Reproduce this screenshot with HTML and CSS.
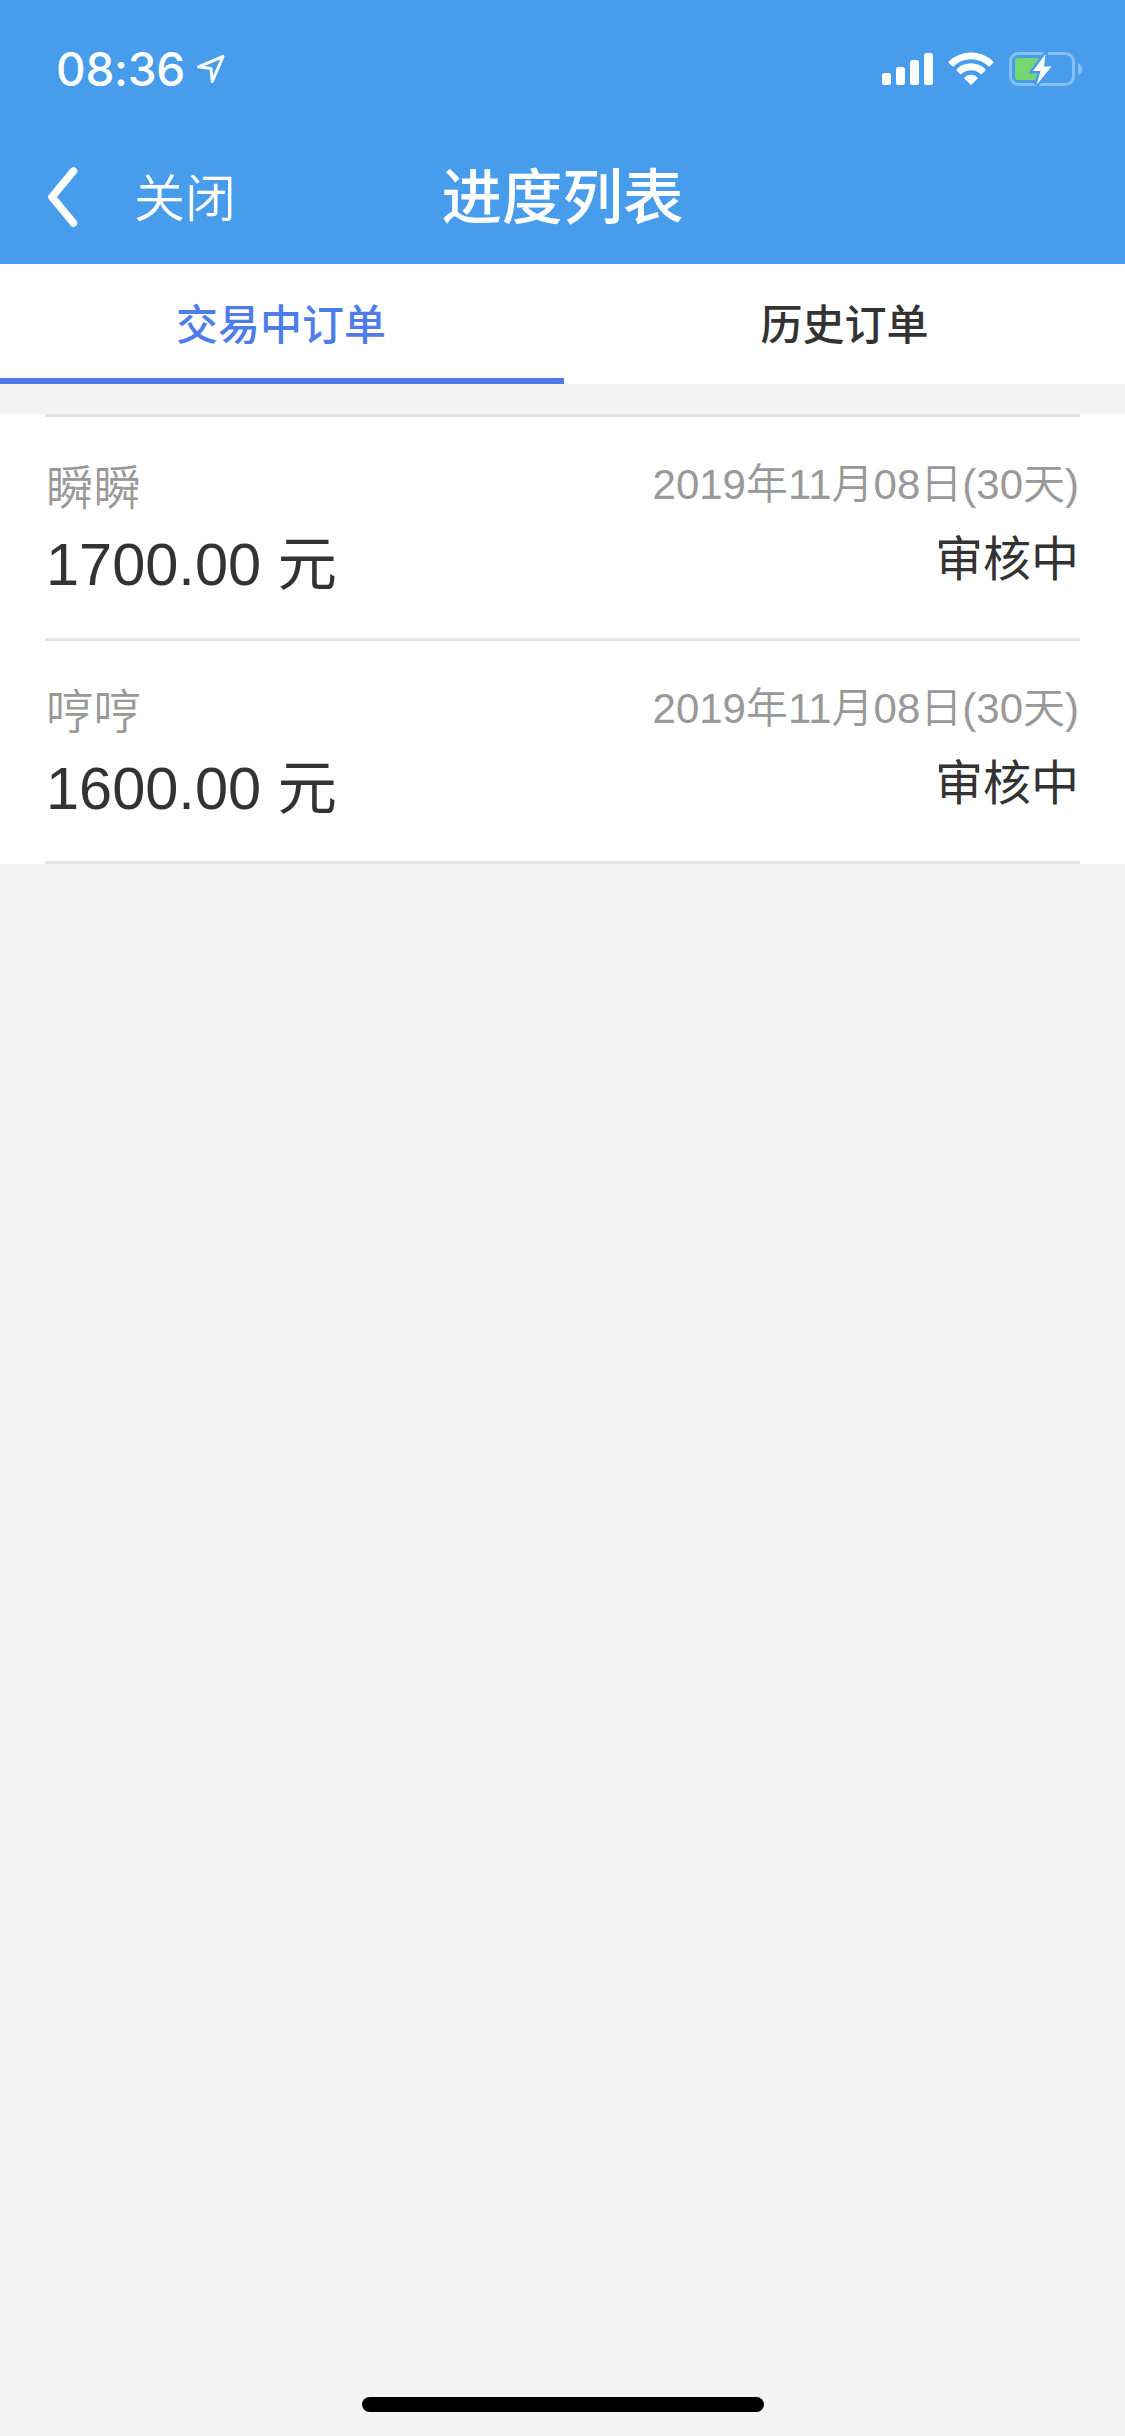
FILE: index.html
```
<!DOCTYPE html>
<html lang="zh-CN">
<head>
    <meta charset="UTF-8">
    <meta name="viewport" content="width=device-width, initial-scale=1.0">
    <title>进度列表</title>
    <link rel="stylesheet" href="styles.css">
</head>
<body>
    <header class="header">
        <div class="status-bar">
            <span class="time">08:36</span>
            <svg class="icon-location" width="32" height="32" viewBox="0 0 32 32">
                <path d="M3.5 13.8 L28 3.5 L17.3 28.5 L16 15.5 Z"/>
            </svg>
            <div class="status-icons">
                <svg class="icon-signal" width="52" height="34" viewBox="0 0 52 34">
                    <rect x="0" y="21" width="9" height="12" rx="2.5"/>
                    <rect x="14" y="15" width="9" height="18" rx="2.5"/>
                    <rect x="28" y="8" width="9" height="25" rx="2.5"/>
                    <rect x="42" y="1" width="9" height="32" rx="2.5"/>
                </svg>
                <svg class="icon-wifi" width="46" height="34" viewBox="0 0 46 34">
                    <path d="M0.8 9.5 A32 32 0 0 1 45.2 9.5 Q45.8 10.2 45.2 10.9 L41.8 14.2 Q41 14.8 40.3 14.2 A25 25 0 0 0 5.7 14.2 Q5 14.8 4.2 14.2 L0.8 10.9 Q0.2 10.2 0.8 9.5 Z"/>
                    <path d="M8.6 17.2 A20.5 20.5 0 0 1 37.4 17.2 Q38 17.9 37.4 18.6 L34 21.9 Q33.3 22.5 32.5 21.9 A14 14 0 0 0 13.5 21.9 Q12.7 22.5 12 21.9 L8.6 18.6 Q8 17.9 8.6 17.2 Z"/>
                    <path d="M16.6 25.2 A9.5 9.5 0 0 1 29.4 25.2 Q30 26 29.4 26.7 L23.7 32.4 Q23 33 22.3 32.4 L16.6 26.7 Q16 26 16.6 25.2 Z"/>
                </svg>
                <svg class="icon-battery" width="74" height="36" viewBox="0 0 74 36">
                    <rect class="battery-frame" x="1.5" y="2.5" width="63" height="31" rx="8"/>
                    <path class="battery-cap" d="M69 12 Q73.5 14 73.5 18 Q73.5 22 69 24 Z"/>
                    <rect class="battery-level" x="6" y="7" width="26" height="22" rx="3"/>
                    <path class="battery-bolt" d="M36.5 3 L24 20 H31.5 L27.5 34 L42.5 15.5 H35 Z"/>
                </svg>
            </div>
        </div>
        <div class="nav-bar">
            <div class="nav-left">
                <svg class="icon-back" width="32" height="64" viewBox="0 0 32 64">
                    <path d="M27.5 6 L6 32 L27.5 58"/>
                </svg>
                <span class="close">关闭</span>
            </div>
            <h1 class="title">进度列表</h1>
        </div>
    </header>

    <nav class="tabs">
        <a class="tab active">交易中订单</a>
        <a class="tab">历史订单</a>
    </nav>

    <ul class="order-list">
        <li class="order">
            <div class="order-info">
                <span class="name">瞬瞬</span>
                <span class="amount">1700.00 元</span>
            </div>
            <div class="order-state">
                <span class="date">2019年11月08日(30天)</span>
                <span class="state">审核中</span>
            </div>
        </li>
        <li class="order">
            <div class="order-info">
                <span class="name">哼哼</span>
                <span class="amount">1600.00 元</span>
            </div>
            <div class="order-state">
                <span class="date">2019年11月08日(30天)</span>
                <span class="state">审核中</span>
            </div>
        </li>
    </ul>

    <div class="home-indicator"></div>
</body>
</html>
```
FILE: styles.css
```
* {
    box-sizing: border-box;
}

body {
    margin: 0;
    min-height: 2436px;
    display: flex;
    flex-direction: column;
    background-color: #f4f4f4;
    color: #333;
    font-family: "Liberation Sans", "Noto Sans CJK SC", sans-serif;
}

/* 顶部 */
.header {
    height: 264px;
    background-color: #479ceb;
    color: #fff;
}

.status-bar {
    display: flex;
    align-items: center;
    height: 132px;
    padding: 6px 42px 0 56px;
}

.time {
    width: 132px;
    font-family: Inter, sans-serif;
    font-size: 46px;
    font-weight: 500;
    letter-spacing: -0.3px;
    line-height: 60px;
    white-space: nowrap;
}

.icon-location {
    margin-left: 7px;
    fill: none;
    stroke: #fff;
    stroke-width: 3;
    stroke-linejoin: round;
}

.status-icons {
    display: flex;
    align-items: center;
    margin-left: auto;
}

.icon-signal,
.icon-wifi {
    fill: #fff;
}

.icon-wifi {
    margin-left: 14px;
}

.icon-battery {
    margin-left: 15px;
}

.battery-frame {
    fill: none;
    stroke: #84c0f3;
    stroke-width: 3;
}

.battery-cap {
    fill: #84c0f3;
}

.battery-level {
    fill: #76d672;
}

.battery-bolt {
    fill: #fff;
    stroke: #479ceb;
    stroke-width: 5;
    paint-order: stroke;
}

.nav-bar {
    display: grid;
    grid-template-columns: 1fr auto 1fr;
    align-items: center;
    height: 130px;
    padding: 0 46px;
}

.nav-left {
    display: flex;
    align-items: center;
}

.icon-back {
    fill: none;
    stroke: #fff;
    stroke-width: 7.5;
    stroke-linecap: round;
    stroke-linejoin: round;
}

.close {
    margin-left: 56px;
    padding-top: 6px;
    font-size: 51px;
    font-weight: 350;
    line-height: 60px;
}

.title {
    margin: 0;
    padding-top: 2px;
    font-size: 60.5px;
    font-weight: 500;
    line-height: 80px;
}

/* 标签页 */
.tabs {
    display: flex;
    height: 120px;
    background-color: #fff;
}

.tab {
    flex: 1;
    border-bottom: 6px solid transparent;
    font-size: 42px;
    font-weight: 500;
    line-height: 123px;
    text-align: center;
}

.tab.active {
    flex: 0 0 564px;
    padding-right: 2px;
    border-bottom-color: #4e7dea;
    color: #4e7dea;
}

/* 订单列表 */
.order-list {
    margin: 30px 0 0;
    padding: 0 45px;
    list-style: none;
    background-color: #fff;
}

.order {
    display: flex;
    justify-content: space-between;
    height: 223px;
    padding: 31px 1px 0;
    border-bottom: 3px solid #e5e5e5;
}

.order:first-child {
    height: 227px;
    border-top: 3px solid #e5e5e5;
}

.order-info,
.order-state {
    display: flex;
    flex-direction: column;
}

.order-state {
    align-items: flex-end;
}

.name {
    color: #999;
    font-size: 47.5px;
    font-weight: 350;
    line-height: 81px;
}

.amount {
    font-size: 59.5px;
    line-height: 71px;
}

.date {
    color: #999;
    font-size: 42px;
    font-weight: 350;
    line-height: 73px;
}

.state {
    font-size: 48px;
    line-height: 78px;
}

/* 底部横条 */
.home-indicator {
    width: 402px;
    height: 15px;
    margin: auto auto 24px;
    border-radius: 8px;
    background-color: #000;
}
```
